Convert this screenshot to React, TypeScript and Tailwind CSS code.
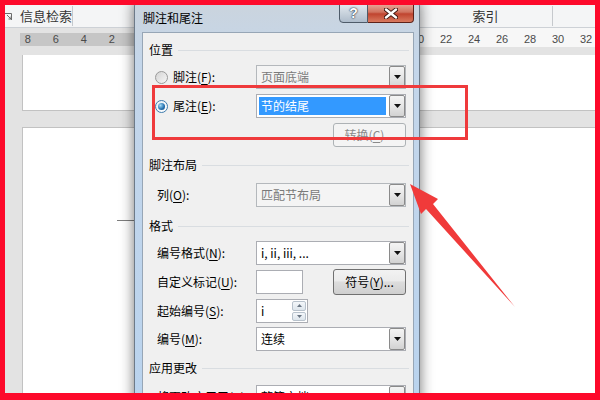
import React from 'react';

const cjk = "font-['Noto_Sans_CJK_SC','Microsoft_YaHei',sans-serif]";

const leftTicks = ['8', '6', '4', '2'];
const rightTicks = ['2', '4', '6', '8', '10', '12', '14', '16', '18', '20', '22', '24', '26', '28', '30', '32'];

function Key({ k }: { k: string }) {
  return <span className="underline underline-offset-2">{k}</span>;
}

function DropBtn() {
  return (
    <div className="w-[16px] h-full shrink-0 border border-[#8a8a8a] rounded-[2px] bg-[linear-gradient(#f4f4f4,#e6e6e6_50%,#d2d2d2)] flex items-center justify-center">
      <svg width="7" height="4" viewBox="0 0 7 4">
        <path d="M0 0h7L3.5 4z" fill="#111" />
      </svg>
    </div>
  );
}

function Combo({ text, disabled, selected }: { text: string; disabled?: boolean; selected?: boolean }) {
  return (
    <div
      className={`flex w-[150px] h-full border ${
        disabled ? 'border-[#b4b8bc] bg-[#f4f4f4] text-[#7a7a7a]' : 'border-[#abadb3] bg-white text-black'
      }`}
    >
      {selected ? (
        <div className="flex-1 m-[2px] mr-[3px] bg-[#3399ff] text-white flex items-center pl-[2px]">{text}</div>
      ) : (
        <div className="flex-1 flex items-center pl-[4px] whitespace-nowrap">{text}</div>
      )}
      <DropBtn />
    </div>
  );
}

function Radio({ checked }: { checked?: boolean }) {
  return (
    <div
      className={`w-[13px] h-[13px] rounded-full border flex items-center justify-center ${
        checked
          ? 'border-[#3d7bad] bg-[linear-gradient(135deg,#e6eef5,#ffffff)]'
          : 'border-[#9a9a9a] bg-[linear-gradient(135deg,#d4d4d4,#f6f6f6)]'
      }`}
    >
      {checked && (
        <div className="w-[7px] h-[7px] rounded-full bg-[radial-gradient(circle_at_35%_35%,#a6dcf7,#2a76b4_55%,#0d3f72)]" />
      )}
    </div>
  );
}

function GroupHead({ title, mt }: { title: string; mt: string }) {
  return (
    <div className={`${mt} h-[18px] flex items-center pl-[6px] pr-[4px]`}>
      <span className="text-black">{title}</span>
      <div className="flex-1 ml-[5px] h-px bg-[#d9dde1]" />
    </div>
  );
}

function Row({ mt, label, children }: { mt: string; label: React.ReactNode; children: React.ReactNode }) {
  return (
    <div className={`${mt} h-[24px] flex items-center`}>
      <div className="w-[113px] pl-[14px] shrink-0 whitespace-nowrap">{label}</div>
      <div className="h-full flex items-center gap-[30px]">{children}</div>
    </div>
  );
}

function Dialog() {
  return (
    <div className="absolute left-[134px] top-0 w-[286px] h-[420px] rounded-t-[6px] border border-[#6d7a88] bg-[linear-gradient(#cbd4dd,#c4d6ea_60px,#b9d3ee)] shadow-[0_0_14px_rgba(0,0,0,0.55)] flex flex-col">
      <div className="h-[31px] flex items-start shrink-0">
        <div className="mt-[9px] ml-[8px] leading-[16px] text-black">脚注和尾注</div>
        <div className="ml-auto mr-[5px] mt-[2px] flex">
          <div className="w-[29px] h-[20px] rounded-bl-[4px] border border-[#4e5b69] bg-[linear-gradient(#e4eaf0,#c9d3dd_50%,#aebccb)] flex items-center justify-center text-white font-bold text-[14px] leading-none [text-shadow:0_0_2px_#1d2a38,0_0_1px_#1d2a38] font-['Liberation_Sans',sans-serif]">
            ?
          </div>
          <div className="w-[46px] h-[20px] rounded-br-[4px] border border-l-0 border-[#5e2219] bg-[linear-gradient(#e9a899,#d0735f_45%,#c0442f_55%,#d97a5f)] flex items-center justify-center">
            <svg width="14" height="11" viewBox="0 0 14 11">
              <path d="M2 1.5l10 8M12 1.5l-10 8" stroke="#3b150f" strokeWidth="4.2" strokeLinecap="round" />
              <path d="M2 1.5l10 8M12 1.5l-10 8" stroke="#ffffff" strokeWidth="2.4" strokeLinecap="round" />
            </svg>
          </div>
        </div>
      </div>
      <div className="ml-[7px] mr-[5px] flex-1 bg-[#f0f0f0] border border-[#97a6b6] flex flex-col text-[12px] leading-none">
        <GroupHead title="位置" mt="mt-[8px]" />
        <div className="mt-[6px] h-[24px] flex items-center">
          <div className="w-[113px] pl-[12px] shrink-0 flex items-center gap-[5px] text-black">
            <Radio />
            <span>
              脚注(<Key k="F" />):
            </span>
          </div>
          <div className="h-full">
            <Combo text="页面底端" disabled />
          </div>
        </div>
        <div className="mt-[5px] h-[24px] flex items-center">
          <div className="w-[113px] pl-[12px] shrink-0 flex items-center gap-[5px] text-black">
            <Radio checked />
            <span>
              尾注(<Key k="E" />):
            </span>
          </div>
          <div className="h-full">
            <Combo text="节的结尾" selected />
          </div>
        </div>
        <div className="mt-[5px] h-[24px] flex justify-end pr-[7px]">
          <div className="w-[73px] h-full rounded-[3px] border border-[#adb2b5] bg-[#f4f4f4] text-[#8a8a8a] flex items-center justify-center whitespace-nowrap">
            转换(<Key k="C" />)...
          </div>
        </div>
        <GroupHead title="脚注布局" mt="mt-[9px]" />
        <Row
          mt="mt-[9px]"
          label={
            <span>
              列(<Key k="O" />):
            </span>
          }
        >
          <Combo text="匹配节布局" disabled />
        </Row>
        <GroupHead title="格式" mt="mt-[10px]" />
        <Row
          mt="mt-[6px]"
          label={
            <span>
              编号格式(<Key k="N" />):
            </span>
          }
        >
          <Combo text="i, ii, iii, ..." />
        </Row>
        <Row
          mt="mt-[5px]"
          label={
            <span>
              自定义标记(<Key k="U" />):
            </span>
          }
        >
          <div className="w-[47px] h-full border border-[#abadb3] bg-white" />
          <div className="w-[73px] h-[26px] rounded-[3px] border border-[#707070] bg-[linear-gradient(#f2f2f2,#ebebeb_45%,#dddddd_50%,#cfcfcf)] flex items-center justify-center text-black whitespace-nowrap">
            符号(<Key k="Y" />)...
          </div>
        </Row>
        <Row
          mt="mt-[5px]"
          label={
            <span>
              起始编号(<Key k="S" />):
            </span>
          }
        >
          <div className="w-[52px] h-full border border-[#abadb3] bg-white flex">
            <div className="flex-1 flex items-center pl-[4px] text-black">i</div>
            <div className="w-[16px] flex flex-col gap-px p-px">
              <div className="flex-1 rounded-[2px] border border-[#b8c2cc] bg-[linear-gradient(#f4f7fa,#dde5ec)] flex items-center justify-center">
                <svg width="5" height="3" viewBox="0 0 5 3">
                  <path d="M0 3h5L2.5 0z" fill="#6a7684" />
                </svg>
              </div>
              <div className="flex-1 rounded-[2px] border border-[#b8c2cc] bg-[linear-gradient(#f4f7fa,#dde5ec)] flex items-center justify-center">
                <svg width="5" height="3" viewBox="0 0 5 3">
                  <path d="M0 0h5L2.5 3z" fill="#6a7684" />
                </svg>
              </div>
            </div>
          </div>
        </Row>
        <Row
          mt="mt-[4px]"
          label={
            <span>
              编号(<Key k="M" />):
            </span>
          }
        >
          <Combo text="连续" />
        </Row>
        <GroupHead title="应用更改" mt="mt-[8px]" />
        <Row
          mt="mt-[8px]"
          label={
            <span>
              将更改应用于(<Key k="P" />):
            </span>
          }
        >
          <Combo text="整篇文档" />
        </Row>
      </div>
    </div>
  );
}

export default function App() {
  return (
    <div className={`relative w-[600px] h-[400px] overflow-hidden bg-[#e3e3e3] flex flex-col text-[12px] ${cjk}`}>
      {/* ribbon strip */}
      <div className="h-[28px] shrink-0 pt-[5px] bg-[#f4f5f6] border-b border-[#cdd1d6] flex items-center text-[#333] text-[13px]">
        <svg className="ml-[5px]" width="7" height="7" viewBox="0 0 7 7">
          <path d="M0 0.5h6.5V7M2 2l4 4M3.5 6H6V3.5" stroke="#6b6b6b" fill="none" />
        </svg>
        <span className="ml-[8px] w-[52px] whitespace-nowrap">信息检索</span>
        <div className="w-[346px] h-[20px] border-l border-[#c6c9cd]" />
        <div className="w-[135px] h-[20px] border-l border-r border-[#c6c9cd] flex items-center justify-center">索引</div>
      </div>

      {/* ruler */}
      <div className="h-[19px] shrink-0 flex font-['Liberation_Sans',sans-serif] text-[11px] text-[#4a4a4a]">
        <div className="w-[20px]" />
        <div className="w-[120px]">
          <div className="mt-[5px] h-[13px] bg-[#c6c6c6] flex items-center">
            {leftTicks.map((t, i) => (
              <div key={i} className={`w-[28px] shrink-0 text-center ${i === 0 ? '-ml-[6px]' : ''}`}>
                {t}
              </div>
            ))}
          </div>
        </div>
        <div className="flex-1 bg-[#f7f7f7] pl-[14px]">
          <div className="mt-[5px] h-[13px] flex items-center">
            {rightTicks.map((t, i) => (
              <div key={i} className="w-[28px] shrink-0 text-center">
                {t}
              </div>
            ))}
          </div>
        </div>
      </div>

      <div className="h-[8px] shrink-0" />
      <div className="ml-[22px] h-[56px] shrink-0 bg-white border-l border-b border-[#c2c2c2]" />
      <div className="h-[16px] shrink-0" />
      <div className="ml-[22px] flex-1 bg-white border-l border-t border-[#c2c2c2]">
        <div className="mt-[92px] ml-[94px] w-[20px] h-px bg-[#7d7d7d]" />
      </div>

      <Dialog />

      {/* annotations */}
      <div className="absolute left-[152px] top-[85px] w-[316px] h-[55px] border-[3px] border-[#ef3a3c]" />
      <svg className="absolute left-0 top-0" width="600" height="400" viewBox="0 0 600 400">
        <polygon points="410,184 438,199 433,204 515,307 426,209 421,214" fill="#f03a3a" />
      </svg>
      <div className="absolute inset-0 border-t-[5px] border-l-[5px] border-r-[5px] border-b-[7px] border-[#fd0a2b] pointer-events-none" />
    </div>
  );
}
